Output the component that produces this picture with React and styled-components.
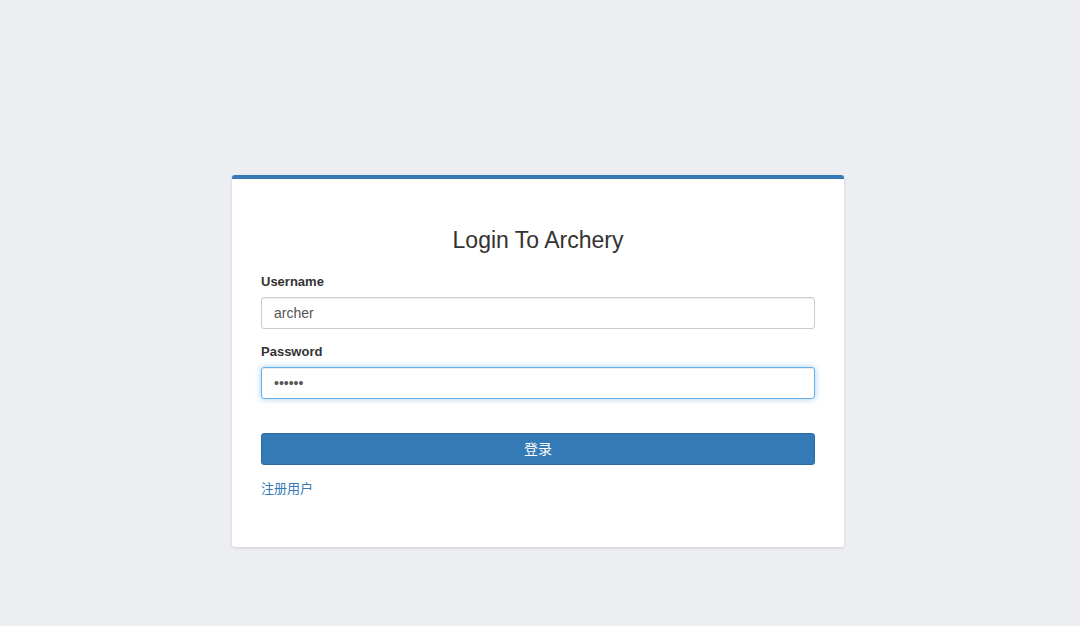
import React from "react";
import styled, { createGlobalStyle } from "styled-components";

const GlobalStyle = createGlobalStyle`
  html, body {
    margin: 0;
    padding: 0;
    background: #eceef1;
  }
  body {
    font-family: "Liberation Sans", Arial, "Noto Sans CJK SC", sans-serif;
    color: #333;
  }
  * {
    box-sizing: border-box;
  }
`;

const Page = styled.div`
  width: 100%;
  min-height: 626px;
  display: flex;
  justify-content: center;
  align-items: flex-start;
  padding-top: 175px;
`;

const LoginBox = styled.div`
  width: 612px;
  margin-left: -4px;
  background: #fff;
  border-top: 4px solid #337ab7;
  border-radius: 3px;
  box-shadow: 0 1px 3px rgba(0, 0, 0, 0.14);
  padding: 49px 29px 49px 29px;
`;

const Title = styled.h3`
  margin: 0 0 21px;
  font-size: 23px;
  line-height: 24px;
  font-weight: 400;
  text-align: center;
  color: #333;
`;

const Group = styled.div`
  margin-bottom: ${(p) => p.$gap ?? 14}px;
`;

const Label = styled.label`
  display: block;
  font-size: 13px;
  line-height: 18px;
  font-weight: 700;
  color: #333;
  margin-bottom: 6px;
`;

const Input = styled.input`
  display: block;
  width: 100%;
  height: 32px;
  padding: 6px 12px;
  font-family: "Liberation Sans", Arial, sans-serif;
  font-size: 14px;
  color: #555;
  background: #fff;
  border: 1px solid ${(p) => (p.$focused ? "#66afe9" : "#ccc")};
  border-radius: 3px;
  outline: none;
  box-shadow: ${(p) =>
    p.$focused
      ? "inset 0 1px 1px rgba(0,0,0,.075), 0 0 6px rgba(102,175,233,.6)"
      : "inset 0 1px 1px rgba(0,0,0,.075)"};
`;

const Button = styled.button`
  display: block;
  width: 100%;
  height: 32px;
  margin-top: 34px;
  padding: 0 12px 2px;
  background: #337ab7;
  border: 1px solid #2e6da4;
  border-radius: 3px;
  color: #fff;
  font-family: "Liberation Sans", Arial, "Noto Sans CJK SC", sans-serif;
  font-size: 14px;
  cursor: pointer;
`;

const RegisterLink = styled.a`
  display: inline-block;
  margin-top: 15px;
  font-size: 13px;
  line-height: 18px;
  color: #337ab7;
  text-decoration: none;
  font-family: "Liberation Sans", Arial, "Noto Sans CJK SC", sans-serif;
`;

export default function App() {
  return (
    <>
      <GlobalStyle />
      <Page>
        <LoginBox>
          <Title>Login To Archery</Title>
          <Group>
            <Label>Username</Label>
            <Input type="text" defaultValue="archer" />
          </Group>
          <Group $gap={0}>
            <Label>Password</Label>
            <Input type="password" defaultValue="123456" $focused />
          </Group>
          <Button type="button">登录</Button>
          <RegisterLink href="#">注册用户</RegisterLink>
        </LoginBox>
      </Page>
    </>
  );
}
